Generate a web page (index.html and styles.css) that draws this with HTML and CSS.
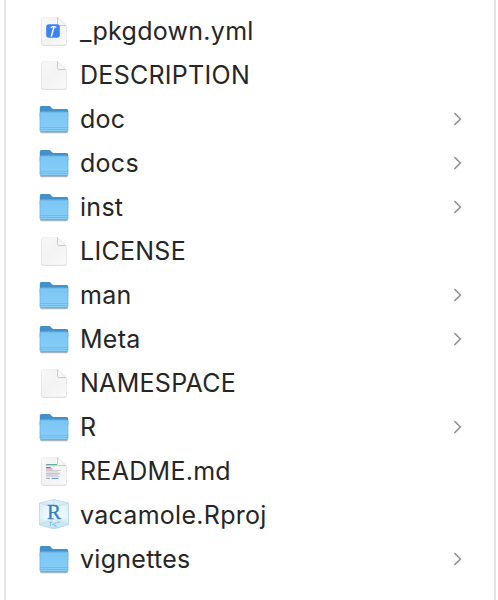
FILE: index.html
```html
<!DOCTYPE html>
<html lang="en">
<head>
<meta charset="utf-8">
<title>Files</title>
<link rel="stylesheet" href="styles.css">
</head>
<body>
<svg class="defs" aria-hidden="true">
  <defs>
    <linearGradient id="paper" x1="0" y1="0" x2="1" y2="1"><stop offset="0" stop-color="#f8f8f8"/><stop offset=".5" stop-color="#f3f3f3"/><stop offset="1" stop-color="#fafafa"/></linearGradient>
    <linearGradient id="fold" x1="0" y1="1" x2="1" y2="0"><stop offset="0" stop-color="#fff"/><stop offset=".5" stop-color="#f1f1f1"/></linearGradient>
    <linearGradient id="front" x1="0" y1="0" x2="0" y2="1"><stop offset="0" stop-color="#7cc5f3"/><stop offset="1" stop-color="#88cff9"/></linearGradient>
    <linearGradient id="cube" x1="0" y1="0" x2="0" y2="1"><stop offset="0" stop-color="#d8edf6"/><stop offset=".6" stop-color="#e6f5fa"/><stop offset="1" stop-color="#b9dff0"/></linearGradient>
    <symbol id="doc" viewBox="0 0 32 32">
      <path d="M5 3.200h14.600l9.100 8.300V29a1.800 1.800 0 0 1-1.800 1.800H5A1.800 1.800 0 0 1 3.200 29V5A1.800 1.800 0 0 1 5 3.200z" fill="#d2d2d2"/>
      <path d="M5.300 2.500h14.200l9 8.500v17.300a1.800 1.800 0 0 1-1.800 1.800H5.300a1.800 1.800 0 0 1-1.800-1.800v-24A1.800 1.800 0 0 1 5.300 2.500z" fill="url(#paper)" stroke="#e6e6e6" stroke-width=".5"/>
      <path d="M19.500 2.500v6.700a1.300 1.300 0 0 0 1.300 1.300h7.700z" fill="url(#fold)"/>
      <path d="M19.500 2.500v6.700a1.300 1.300 0 0 0 1.300 1.300h7" fill="none" stroke="#bcbcbc" stroke-width=".8"/>
      <path d="M19.500 2.500l9 8.200" stroke="#e0e0e0" stroke-width=".6"/>
    </symbol>
    <symbol id="folder" viewBox="0 0 32 32">
      <path d="M2 27.500h28v1.300a1.400 1.400 0 0 1-1.400 1.400H3.400A1.400 1.400 0 0 1 2 28.800z" fill="#b4babf"/>
      <path d="M1.800 4.600A1.500 1.500 0 0 1 3.300 3.100h7.400c1.200 0 1.700.5 2.500 1.300.8.900 1.400 1.500 2.700 1.500h12.700a1.600 1.600 0 0 1 1.600 1.600V14H1.800z" fill="#4391cb"/>
      <path d="M1.800 10.100a1.300 1.300 0 0 1 1.300-1.300h25.800a1.300 1.300 0 0 1 1.300 1.300v17.700a1.300 1.300 0 0 1-1.300 1.300H3.100a1.300 1.300 0 0 1-1.300-1.300z" fill="url(#front)"/>
      <path d="M2.100 28V10.200a1 1 0 0 1 1-1h25.800a1 1 0 0 1 1 1V28" fill="none" stroke="#67b3e5" stroke-width=".7"/>
      <path d="M2.300 24.500h27.400M2.300 26.500h27.400" stroke="#69b2df" stroke-width=".7"/>
      <path d="M2.600 28.700h26.800" stroke="#559fcf" stroke-width=".8"/>
    </symbol>
    <symbol id="yml" viewBox="0 0 32 32">
      <use href="#doc"/>
      <rect x="8.200" y="9.300" width="13.600" height="13.500" rx="2.800" fill="#3a82f5"/>
      <path d="M15.900 12.300l-2.500 8.800" stroke="#fff" stroke-width="1.600" stroke-linecap="round"/>
      <path d="M12.700 12.700l1.800-1 2.300-.1 1.500.9" fill="none" stroke="#fff" stroke-width="1.200"/>
    </symbol>
    <symbol id="readme" viewBox="0 0 32 32">
      <use href="#doc"/>
      <g fill="none" stroke-width="1">
        <path d="M8 9.500h4" stroke="#8295b5"/><path d="M12 9.500h7" stroke="#57b99b"/>
        <path d="M8 10.700h11" stroke="#a3bdcb" stroke-width=".7"/>
        <path d="M8 12.500h4.800" stroke="#d35893"/><path d="M8 13.900h6.500" stroke="#d77ba3"/>
        <path d="M8 15.500h15M8 17h12.500" stroke="#c0c0c6" stroke-width=".8"/>
        <path d="M8 18.800h14" stroke="#b9a6de"/><path d="M8 20.300h12" stroke="#b8b1d2" stroke-width=".8"/>
        <path d="M8 21.800h14" stroke="#c0c0c5" stroke-width=".7"/>
        <path d="M8 23.500h4" stroke="#a6b4c4"/><path d="M13.500 23.500h7" stroke="#6d98e5"/>
      </g>
    </symbol>
    <symbol id="rproj" viewBox="0 0 32 32">
      <path d="M16 .5L30.500 4.200v21.500L16 30 1.500 25.700V4.200z" fill="url(#cube)" stroke="#b4d8e8" stroke-width=".8" stroke-linejoin="round"/>
      <path d="M5 7.500L16 5.800l11 1.700v12.800L16 22.500 5 20.300z" fill="#eff9fc" opacity=".65"/>
      <path d="M1.500 4.200L16 7.500l14.500-3.300M1.500 25.700L16 20.500l14.500 5.200M16 .5v6" fill="none" stroke="#b7dbea" stroke-width=".7"/>
      <text class="r-letter" x="16" y="20" text-anchor="middle">R</text>
      <path d="M11 23.200h3.500M19 23.200h3M12.500 23.200v3.800M14 25.300c3 0 4-.8 4-2.100M15.500 25.300l3 2.300" fill="none" stroke="#8dc0de" stroke-width="1.100"/>
    </symbol>
    <symbol id="chevron" viewBox="0 0 8 14"><path d="M.9 1.500L6.400 7 .9 12.500" fill="none" stroke="#929292" stroke-width="1.700" stroke-linecap="round" stroke-linejoin="round"/></symbol>
  </defs>
</svg>
<ul class="column">
  <li class="row"><svg class="icon"><use href="#yml"/></svg><span class="name">_pkgdown.yml</span></li>
  <li class="row"><svg class="icon"><use href="#doc"/></svg><span class="name">DESCRIPTION</span></li>
  <li class="row"><svg class="icon"><use href="#folder"/></svg><span class="name">doc</span><svg class="chevron"><use href="#chevron"/></svg></li>
  <li class="row"><svg class="icon"><use href="#folder"/></svg><span class="name">docs</span><svg class="chevron"><use href="#chevron"/></svg></li>
  <li class="row"><svg class="icon"><use href="#folder"/></svg><span class="name">inst</span><svg class="chevron"><use href="#chevron"/></svg></li>
  <li class="row"><svg class="icon"><use href="#doc"/></svg><span class="name">LICENSE</span></li>
  <li class="row"><svg class="icon"><use href="#folder"/></svg><span class="name">man</span><svg class="chevron"><use href="#chevron"/></svg></li>
  <li class="row"><svg class="icon"><use href="#folder"/></svg><span class="name">Meta</span><svg class="chevron"><use href="#chevron"/></svg></li>
  <li class="row"><svg class="icon"><use href="#doc"/></svg><span class="name">NAMESPACE</span></li>
  <li class="row"><svg class="icon"><use href="#folder"/></svg><span class="name">R</span><svg class="chevron"><use href="#chevron"/></svg></li>
  <li class="row"><svg class="icon"><use href="#readme"/></svg><span class="name">README.md</span></li>
  <li class="row"><svg class="icon"><use href="#rproj"/></svg><span class="name">vacamole.Rproj</span></li>
  <li class="row"><svg class="icon"><use href="#folder"/></svg><span class="name">vignettes</span><svg class="chevron"><use href="#chevron"/></svg></li>
</ul>
</body>
</html>
```
FILE: styles.css
```css
* { box-sizing: border-box; }
body { margin: 0; background: #fff; overflow: hidden; }
.defs { position: absolute; width: 0; height: 0; }
.column {
  height: 600px;
  margin: 0 2px 0 4px;
  padding: 9px 32px 0 32px;
  border-left: 2px solid #e5e5e5;
  border-right: 2px solid #e5e5e5;
  list-style: none;
}
.row { display: flex; align-items: center; height: 44px; }
.icon { flex: none; width: 32px; height: 32px; overflow: visible; }
.name {
  flex: 1;
  margin-left: 10px;
  color: #262626;
  font: 400 25px/44px Inter, "Liberation Sans", sans-serif;
  letter-spacing: .28px;
  white-space: nowrap;
}
.chevron { flex: none; width: 8px; height: 14px; }
.r-letter { font: 400 21px "Liberation Serif", serif; fill: #347fc9; stroke: #347fc9; stroke-width: .3px; }
```
